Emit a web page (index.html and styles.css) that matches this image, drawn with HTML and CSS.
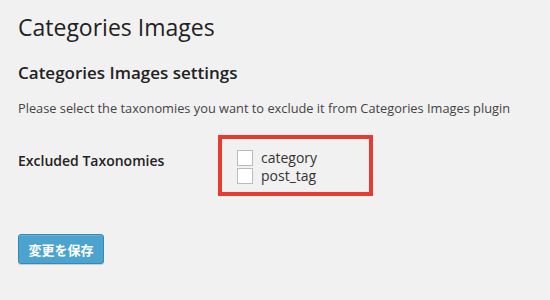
FILE: index.html
```html
<!DOCTYPE html>
<html>
<head>
<meta charset="utf-8">
<link rel="stylesheet" href="styles.css">
</head>
<body>
<div class="wrap">
  <h2 class="title">Categories Images</h2>
  <h3 class="subtitle">Categories Images settings</h3>
  <p class="desc">Please select the taxonomies you want to exclude it from Categories Images plugin</p>
  <div class="row">
    <div class="label">Excluded Taxonomies</div>
    <div class="field">
      <label class="opt"><span class="box"></span>category</label>
      <label class="opt"><span class="box"></span>post_tag</label>
    </div>
  </div>
  <div class="actions">
    <button class="btn">変更を保存</button>
  </div>
</div>
</body>
</html>
```
FILE: styles.css
```css
html, body {
  margin: 0;
  padding: 0;
  background: #f1f1f1;
  width: 550px;
  height: 300px;
  overflow: hidden;
}
body {
  font-family: "Open Sans", "Noto Sans CJK JP", sans-serif;
  color: #444;
}
.wrap {
  padding: 0 18px;
}
.title {
  margin: 0;
  padding-top: 13px;
  font-size: 23px;
  font-weight: 400;
  line-height: 29px;
  color: #222;
}
.subtitle {
  margin: 20px 0 0;
  font-size: 17px;
  font-weight: 600;
  line-height: 22px;
  color: #222;
}
.desc {
  margin: 15px 0 0;
  font-size: 12.8px;
  line-height: 18px;
  color: #444;
}
.row {
  display: flex;
  margin-top: 18px;
}
.label {
  width: 200px;
  padding-top: 17px;
  font-size: 14px;
  font-weight: 600;
  line-height: 18px;
  color: #222;
}
.field {
  width: 147px;
  border: 4px solid #e53b30;
  display: flex;
  flex-direction: column;
  padding-top: 10px;
  box-sizing: content-box;
  height: 43px;
}
.opt {
  display: flex;
  align-items: center;
  height: 18px;
  font-size: 14px;
  line-height: 18px;
  color: #333;
  padding-left: 15px;
}
.box {
  width: 14px;
  height: 14px;
  border: 1px solid #bbb;
  background: #fff;
  margin-right: 8px;
}
.actions {
  margin-top: 38px;
}
.btn {
  width: 86px;
  height: 30px;
  background: #4ca3cd;
  border: 1px solid #3789b3;
  border-radius: 3px;
  color: #fff;
  font-family: "Noto Sans CJK JP", sans-serif;
  font-weight: 700;
  font-size: 13px;
  padding: 0;
  box-shadow: inset 0 1px 0 rgba(120,200,230,0.5), 0 1px 0 rgba(0,0,0,0.15);
}
```
